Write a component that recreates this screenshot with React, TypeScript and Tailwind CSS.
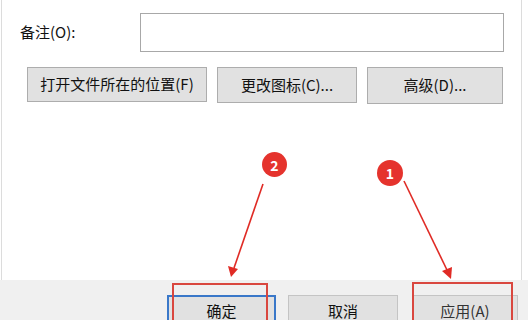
import React from 'react'

const font = { fontFamily: '"Noto Sans CJK SC", "Noto Sans", sans-serif' }

function WinButton({ label, className }: { label: string; className: string }) {
  return (
    <div
      className={`flex items-center justify-center bg-[#e1e1e1] border border-[#adadad] text-[15px] text-[#111] ${className}`}
    >
      {label}
    </div>
  )
}

export default function App() {
  return (
    <div className="relative w-[528px] h-[320px] overflow-hidden bg-white" style={font}>
      {/* main white panel */}
      <div className="ml-[1px] w-[521px] h-[280px] border-l border-r border-[#dcdcdc] bg-white pt-[13px]">
        <div className="flex items-center">
          <div className="w-[138px] pl-[18px] text-[15px] text-[#111]">备注(O):</div>
          <div className="w-[364px] h-[39px] border border-[#a8a8a8] bg-white"></div>
        </div>
        <div className="flex gap-[10px] pl-[25px] mt-[15px]">
          <WinButton label="打开文件所在的位置(F)" className="w-[180px] h-[35px]" />
          <WinButton label="更改图标(C)..." className="w-[140px] h-[36px]" />
          <WinButton label="高级(D)..." className="w-[136px] h-[37px]" />
        </div>
      </div>

      {/* bottom bar */}
      <div className="h-[40px] bg-[#f0f0f0] flex pt-[15px] pl-[167px] gap-[12px]">
        <div className="w-[109px] h-[30px] border-2 border-[#3a78c9] bg-[#e1e1e1] flex justify-center pt-[3px] text-[15px] text-[#111]">
          确定
        </div>
        <div className="w-[110px] h-[30px] border border-[#c4c4c4] bg-[#e1e1e1] flex justify-center pt-[4px] text-[15px] text-[#111]">
          取消
        </div>
        <div className="w-[106px] h-[30px] border border-[#c4c4c4] bg-[#e1e1e1] flex justify-center pt-[4px] text-[15px] text-[#333] ml-[2px]">
          应用(A)
        </div>
      </div>

      {/* annotation boxes */}
      <div className="absolute left-[172px] top-[283px] w-[96px] h-[50px] border-2 border-[#d9473f]"></div>
      <div className="absolute left-[412px] top-[282px] w-[101px] h-[50px] border-2 border-[#d9473f]"></div>

      {/* arrows */}
      <svg className="absolute left-0 top-0" width="528" height="320" viewBox="0 0 528 320">
        <line x1="263" y1="184" x2="234" y2="268" stroke="#e02b25" strokeWidth="1.6" />
        <polygon points="231,277 228,266 238,269" fill="#e02b25" />
        <line x1="404" y1="181" x2="447" y2="270" stroke="#e02b25" strokeWidth="1.6" />
        <polygon points="451,279 442,271 452,267" fill="#e02b25" />
      </svg>

      {/* badges */}
      <div className="absolute left-[262px] top-[152px] w-[25px] h-[25px] rounded-full bg-[#e5332d] flex items-center justify-center text-white text-[14px] font-bold leading-none">
        2
      </div>
      <div className="absolute left-[377px] top-[160px] w-[26px] h-[26px] rounded-full bg-[#e5332d] flex items-center justify-center text-white text-[14px] font-bold leading-none">
        1
      </div>
    </div>
  )
}
